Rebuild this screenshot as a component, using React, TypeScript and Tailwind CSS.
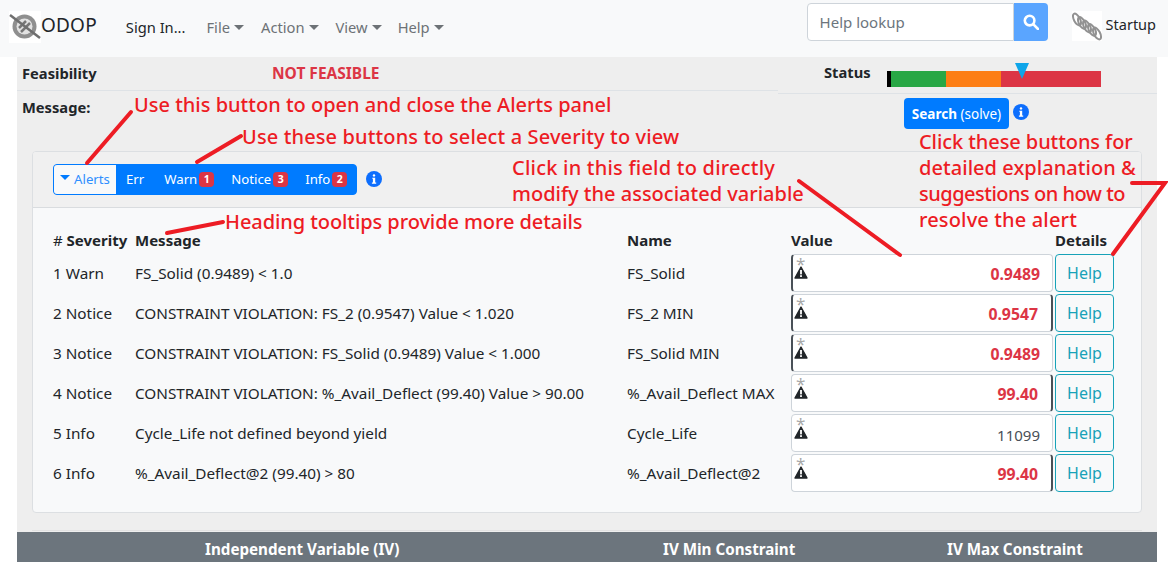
const rows = [
  { n: 1, sev: "Warn", msg: "FS_Solid (0.9489) < 1.0", name: "FS_Solid", value: "0.9489", bad: true, leftBar: true, rightBar: false },
  { n: 2, sev: "Notice", msg: "CONSTRAINT VIOLATION: FS_2 (0.9547) Value < 1.020", name: "FS_2 MIN", value: "0.9547", bad: true, leftBar: true, rightBar: true },
  { n: 3, sev: "Notice", msg: "CONSTRAINT VIOLATION: FS_Solid (0.9489) Value < 1.000", name: "FS_Solid MIN", value: "0.9489", bad: true, leftBar: true, rightBar: false },
  { n: 4, sev: "Notice", msg: "CONSTRAINT VIOLATION: %_Avail_Deflect (99.40) Value > 90.00", name: "%_Avail_Deflect MAX", value: "99.40", bad: true, leftBar: false, rightBar: true },
  { n: 5, sev: "Info", msg: "Cycle_Life not defined beyond yield", name: "Cycle_Life", value: "11099", bad: false, leftBar: false, rightBar: false },
  { n: 6, sev: "Info", msg: "%_Avail_Deflect@2 (99.40) > 80", name: "%_Avail_Deflect@2", value: "99.40", bad: true, leftBar: false, rightBar: true },
];

function Caret() {
  return <span className="ml-1 inline-block border-x-[5px] border-t-[5px] border-x-transparent border-t-current align-[3px]" />;
}

function InfoDot({ className }: { className: string }) {
  return (
    <svg viewBox="0 0 16 16" className={className}>
      <circle cx="8" cy="8" r="8" fill="#0d6efd" />
      <circle cx="8" cy="4.4" r="1.2" fill="#fff" />
      <path d="M6.3 6.7h2.9v4.9h1v1.1H5.9v-1.1h1V7.8h-.6z" fill="#fff" />
    </svg>
  );
}

function WarnIcon() {
  return (
    <svg viewBox="0 0 14 13" className="h-[13px] w-[14px]">
      <path d="M7 1 13 12H1z" fill="#212529" stroke="#212529" strokeWidth="1.4" strokeLinejoin="round" />
      <rect x="6.1" y="4" width="1.8" height="4.4" fill="#fff" />
      <rect x="6.1" y="9.2" width="1.8" height="1.8" fill="#fff" />
    </svg>
  );
}

function LogoIcon() {
  return (
    <svg viewBox="0 0 32 32" className="h-8 w-8 bg-white">
      <circle cx="15.5" cy="15.5" r="12" fill="#8f8f8f" />
      <circle cx="15.5" cy="15.5" r="8" fill="#e2e2e2" />
      <path d="M10 17 17 10M12 21 21 12" stroke="#777" strokeWidth="2.5" />
      <path d="M1 4 31 27" stroke="#6f6f6f" strokeWidth="2.5" />
    </svg>
  );
}

function SpringIcon() {
  return (
    <svg viewBox="0 0 30 30" className="h-[30px] w-[30px] bg-white" fill="none">
      {[5, 10, 15, 20, 25].map((x) => (
        <ellipse key={x} cx={x} cy={x * 0.7 + 5} rx="3" ry="6.5" transform={`rotate(-28 ${x} ${x * 0.7 + 5})`} stroke="#929292" strokeWidth="2" />
      ))}
    </svg>
  );
}

function Note({ className, children }: { className: string; children: React.ReactNode }) {
  return <div className={`absolute whitespace-nowrap text-[20px] font-medium leading-[24px] text-[#ed1c24] ${className}`}>{children}</div>;
}

function Badge({ n }: { n: number }) {
  return <span className="ml-[2px] flex h-[15px] w-[15px] items-center justify-center rounded-[4px] bg-[#dc3545] text-[10.5px] font-bold text-white">{n}</span>;
}

export default function App() {
  return (
    <div className="relative h-[562px] w-[1168px] overflow-hidden bg-white font-['Noto_Sans',sans-serif] text-[15.3px] text-[#212529]">
      {/* Navbar */}
      <nav className="flex h-[57px] items-start bg-[#f8f9fa] pl-[9px]">
        <div className="mt-[11px] flex items-start text-[19px] leading-7 tracking-[0.2px]">
          <LogoIcon />
          ODOP
        </div>
        <div className="ml-[29px] mt-[17px] flex items-center text-[14.7px] leading-5 text-[#6d7276]">
          <span className="text-[#212529]">Sign In...</span>
          <span className="ml-[21px]">File<Caret /></span>
          <span className="ml-[17px]">Action<Caret /></span>
          <span className="ml-[17px]">View<Caret /></span>
          <span className="ml-4">Help<Caret /></span>
        </div>
        <div className="ml-auto flex items-start">
          <div className="mt-[3px] flex h-[38px] w-[207px] items-center rounded-l border border-[#ced4da] bg-white pl-3 pt-px text-[15px] text-[#6c757d]">Help lookup</div>
          <div className="mt-[3px] flex h-[38px] w-[34px] items-center justify-center rounded-r bg-[#5aa5ff]">
            <svg viewBox="0 0 16 16" className="h-4 w-4" fill="none" stroke="#fff" strokeWidth="2.6">
              <circle cx="6.6" cy="6.6" r="4.8" />
              <path d="M10.2 10.2 15 15" strokeLinecap="round" />
            </svg>
          </div>
          <div className="ml-6 mr-3 mt-[11px] flex items-start gap-1 text-[14.5px] leading-[27px]">
            <SpringIcon />
            Startup
          </div>
        </div>
      </nav>

      {/* Main area */}
      <main className="mx-[17px] flex h-[505px] w-[1140px] flex-col bg-[#eeeeee]">
        <div className="flex h-[94px]">
          <div className="w-[761px]">
            <div className="flex h-[34px] items-center border-b border-[#dee2e6] font-bold">
              <div className="w-[255px] pl-[5px] text-[14.7px]">Feasibility</div>
              <div className="text-[15.5px] text-[#dc3545]">NOT FEASIBLE</div>
            </div>
            <div className="pl-[5px] pt-[5px] text-[14.7px] font-bold">Message:</div>
          </div>
          <div className="flex-1">
            <div className="flex h-[37px] border-b border-[#dee2e6]">
              <div className="ml-[46px] w-[63px] pt-[4px] text-[14.7px] font-bold">Status</div>
              <div className="relative mt-[14px] flex h-4 w-[214px]">
                <div className="w-1 bg-black" />
                <div className="w-[55px] bg-[#28a745]" />
                <div className="w-[55px] bg-[#fd7e14]" />
                <div className="flex-1 bg-[#dc3545]" />
                <div className="absolute -top-[8px] left-[128px] border-x-[7px] border-t-[16px] border-x-transparent border-t-[#0ea5e9]" />
              </div>
            </div>
            <div className="flex">
              <div className="ml-[126px] mt-[4px] flex h-[31px] w-[105px] items-center justify-center rounded bg-[#007bff] pt-px text-[13.5px] text-white">
                <b>Search</b>&nbsp;(solve)
              </div>
              <InfoDot className="ml-[4px] mt-[10px] h-4 w-4" />
            </div>
          </div>
        </div>

        {/* Alerts panel */}
        <section className="mx-[15px] h-[363px] overflow-hidden rounded border border-[#dcdfe2] bg-[#f8f9fa]">
          <div className="flex h-[56px] items-center gap-[9px] border-b border-[#d9dcdf] bg-[#f0f0f0] pl-5">
            <div className="flex h-[31px] items-center overflow-hidden rounded border border-[#007bff] bg-[#007bff] pr-[9px] text-[13.2px] text-white">
              <div className="flex h-full w-[62px] items-center justify-center bg-[#f8f9fa] pt-px text-[#2f8fff]">
                <span className="mb-[5px] mr-1 inline-block border-x-[5px] border-t-[5px] border-x-transparent border-t-[#007bff]" />
                Alerts
              </div>
              <div className="pl-[10px] pt-px">Err</div>
              <div className="ml-[20px] flex items-center pt-px">Warn <Badge n={1} /></div>
              <div className="ml-[17px] flex items-center pt-px">Notice <Badge n={3} /></div>
              <div className="ml-[17px] flex items-center pt-px">Info <Badge n={2} /></div>
            </div>
            <InfoDot className="h-4 w-4" />
          </div>

          <table className="ml-5 w-[1065px] table-fixed border-collapse">
            <thead>
              <tr className="h-[45px] align-bottom text-[15px] font-bold leading-[18px]">
                <th className="w-[81px] pb-[4px] text-left"><span className="font-normal">#</span> Severity</th>
                <th className="w-[493px] pb-[4px] pl-px text-left">Message</th>
                <th className="w-[164px] pb-[4px] text-left">Name</th>
                <th className="w-[264px] pb-[4px] text-left">Value</th>
                <th className="pb-[4px] text-left">Details</th>
              </tr>
            </thead>
            <tbody>
              {rows.map((r) => (
                <tr key={r.n} className="h-10">
                  <td className="pt-px">{r.n} {r.sev}</td>
                  <td className="whitespace-nowrap pl-px pt-px">{r.msg}</td>
                  <td className="whitespace-nowrap pt-px">{r.name}</td>
                  <td>
                    <div className={`relative flex h-[38px] w-[262px] items-center justify-end rounded border border-y-[#ced4da] bg-white pt-[4px] ${r.leftBar ? "border-l-2 border-l-[#495057]" : "border-l-[#ced4da]"} ${r.rightBar ? "border-r-2 border-r-[#495057] pr-[13px]" : "border-r-[#ced4da] pr-3"} ${r.bad ? "text-[15.8px] font-bold text-[#dc3545]" : "text-[15px] text-[#495057]"}`}>
                      <span className={`absolute top-[-1px] text-[17px] font-normal leading-5 text-[#a8a8a8] ${r.leftBar ? "left-[3px]" : "left-[4px]"}`}>*</span>
                      <span className={`absolute top-[11px] ${r.leftBar ? "left-[1px]" : "left-[2px]"}`}><WarnIcon /></span>
                      {r.value}
                    </div>
                  </td>
                  <td>
                    <div className="flex h-[38px] w-[59px] items-center justify-center rounded border border-[#17a2b8] pt-px text-[16px] text-[#17a2b8]">Help</div>
                  </td>
                </tr>
              ))}
            </tbody>
          </table>
        </section>

        <div className="mx-[15px] mt-[17px] border-t border-[#e2e2e2]" />
        <div className="mt-[1px] flex h-[30px] items-center bg-[#6c757d] pt-1 text-[15.2px] font-bold text-white">
          <div className="w-[381px] whitespace-nowrap pl-[188px]">Independent Variable (IV)</div>
          <div className="w-[284px] whitespace-nowrap pl-[265px]">IV Min Constraint</div>
          <div className="whitespace-nowrap pl-[265px]">IV Max Constraint</div>
        </div>
      </main>

      {/* Red annotations over the page */}
      <svg viewBox="0 0 1168 562" className="pointer-events-none absolute left-0 top-0 h-[562px] w-[1168px]" fill="none" stroke="#ed1c24" strokeWidth="4" strokeLinecap="round">
        <path d="M131 112 87 163" />
        <path d="M241 136 197 162" />
        <path d="M223 222 167 233" />
        <path d="M799 181 900 255" />
        <path d="M1132 183H1165L1113 254" />
      </svg>
      <Note className="left-[134px] top-[93px]">Use this button to open and close the Alerts panel</Note>
      <Note className="left-[242px] top-[125px] tracking-[0.13px]">Use these buttons to select a Severity to view</Note>
      <Note className="left-[225px] top-[210px] tracking-[-0.08px]">Heading tooltips provide more details</Note>
      <Note className="left-[512px] top-[156px] tracking-[0.22px]">Click in this field to directly</Note>
      <Note className="left-[512px] top-[182px]">modify the associated variable</Note>
      <Note className="left-[919px] top-[130px] tracking-[-0.08px]">Click these buttons for</Note>
      <Note className="left-[919px] top-[156px] tracking-[0.05px]">detailed explanation &amp;</Note>
      <Note className="left-[919px] top-[182px] tracking-[-0.5px]">suggestions on how to</Note>
      <Note className="left-[919px] top-[208px] tracking-[0.15px]">resolve the alert</Note>
    </div>
  );
}
